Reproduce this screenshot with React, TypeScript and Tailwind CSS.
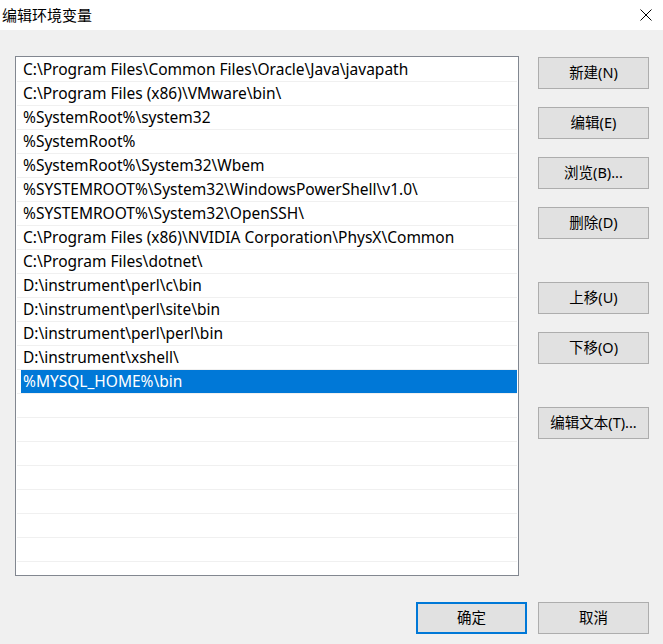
import React from "react";

const paths = [
  "C:\\Program Files\\Common Files\\Oracle\\Java\\javapath",
  "C:\\Program Files (x86)\\VMware\\bin\\",
  "%SystemRoot%\\system32",
  "%SystemRoot%",
  "%SystemRoot%\\System32\\Wbem",
  "%SYSTEMROOT%\\System32\\WindowsPowerShell\\v1.0\\",
  "%SYSTEMROOT%\\System32\\OpenSSH\\",
  "C:\\Program Files (x86)\\NVIDIA Corporation\\PhysX\\Common",
  "C:\\Program Files\\dotnet\\",
  "D:\\instrument\\perl\\c\\bin",
  "D:\\instrument\\perl\\site\\bin",
  "D:\\instrument\\perl\\perl\\bin",
  "D:\\instrument\\xshell\\",
  "%MYSQL_HOME%\\bin",
];

const TOTAL_ROWS = 21;
const SELECTED = 13;

const font = { fontFamily: '"Noto Sans", "Noto Sans CJK SC", sans-serif' };

const Button: React.FC<{ label: string; primary?: boolean; className?: string }> = ({
  label,
  primary = false,
  className = "",
}) => (
  <button
    className={`w-[111px] h-[32px] bg-[#e1e1e1] text-[14.5px] text-black flex items-center justify-center ${
      primary ? "border-2 border-[#0078d7]" : "border border-[#adadad]"
    } ${className}`}
  >
    {label}
  </button>
);

export default function App() {
  const rows = Array.from({ length: TOTAL_ROWS }, (_, i) => paths[i] ?? "");

  return (
    <div className="w-[663px] h-[644px] bg-[#f0f0f0] flex flex-col text-black" style={font}>
      {/* title bar */}
      <div className="h-[30px] bg-white flex items-center justify-between pl-[2px] pr-[11px]">
        <span className="text-[15px]">编辑环境变量</span>
        <svg width="12" height="12" viewBox="0 0 12 12" className="text-black">
          <path d="M0.5 0.5 L11.5 11.5 M11.5 0.5 L0.5 11.5" stroke="currentColor" strokeWidth="1" />
        </svg>
      </div>

      <div className="flex pl-[15px]">
        {/* path list */}
        <div className="mt-[26px] w-[504px] h-[520px] bg-white border border-[#828790] pt-[1px] px-[1px] overflow-hidden">
          {rows.map((p, i) => (
            <div key={i} className="h-[24px] border-b border-[#f0f0f0]">
              {i === SELECTED ? (
                <div className="ml-[4px] h-[23px] bg-[#0078d7] text-white text-[15.5px] leading-[23px] pl-[2px]">
                  {p}
                </div>
              ) : (
                <div className="h-[23px] text-[15.5px] leading-[23px] pl-[6px] whitespace-nowrap">{p}</div>
              )}
            </div>
          ))}
        </div>

        {/* side buttons */}
        <div className="ml-[19px] mt-[27px] flex flex-col">
          <Button label="新建(N)" />
          <Button label="编辑(E)" className="mt-[18px]" />
          <Button label="浏览(B)..." className="mt-[18px]" />
          <Button label="删除(D)" className="mt-[18px]" />
          <Button label="上移(U)" className="mt-[43px]" />
          <Button label="下移(O)" className="mt-[18px]" />
          <Button label="编辑文本(T)..." className="mt-[43px]" />
        </div>
      </div>

      {/* dialog footer */}
      <div className="flex justify-end gap-[11px] pr-[14px] mt-[26px]">
        <Button label="确定" primary />
        <Button label="取消" />
      </div>
    </div>
  );
}
